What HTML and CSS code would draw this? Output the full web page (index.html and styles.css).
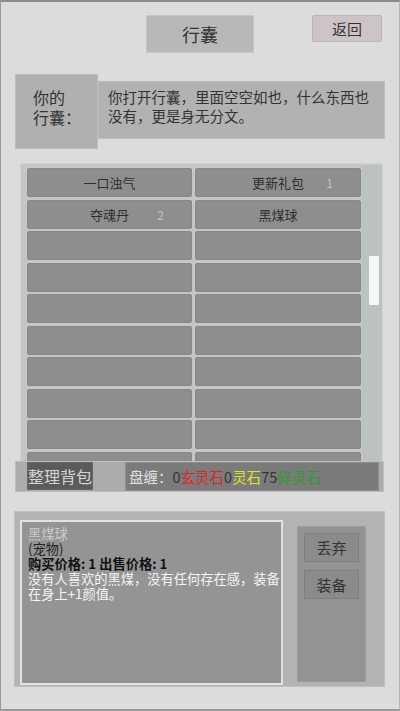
FILE: index.html
```html
<!DOCTYPE html>
<html lang="zh-CN">
<head>
<meta charset="utf-8">
<title>行囊</title>
<link rel="stylesheet" href="styles.css">
</head>
<body>
<div class="screen">
  <header class="header">
    <div class="title">行囊</div>
    <button class="back">返回</button>
  </header>

  <section class="intro">
    <div class="label">你的<br>行囊：</div>
    <div class="desc">你打开行囊，里面空空如也，什么东西也没有，更是身无分文。</div>
  </section>

  <section class="bag">
    <div class="grid">
      <div class="cell">一口浊气</div>
      <div class="cell">更新礼包<span class="count">1</span></div>
      <div class="cell">夺魂丹<span class="count">2</span></div>
      <div class="cell">黑煤球</div>
      <div class="cell"></div><div class="cell"></div>
      <div class="cell"></div><div class="cell"></div>
      <div class="cell"></div><div class="cell"></div>
      <div class="cell"></div><div class="cell"></div>
      <div class="cell"></div><div class="cell"></div>
      <div class="cell"></div><div class="cell"></div>
      <div class="cell"></div><div class="cell"></div>
      <div class="cell"></div><div class="cell"></div>
    </div>
    <div class="track"><div class="thumb"></div></div>
  </section>

  <section class="bar">
    <button class="sort">整理背包</button>
    <div class="money"><span class="m-label">盘缠：</span><span class="m-num">0</span><span class="m-red">玄灵石</span><span class="m-num">0</span><span class="m-yellow">灵石</span><span class="m-num">75</span><span class="m-green">碎灵石</span></div>
  </section>

  <section class="detail">
    <div class="info">
      <div class="i-name">黑煤球</div>
      <div class="i-type">(宠物)</div>
      <div class="i-price">购买价格: 1 出售价格: 1</div>
      <div class="i-desc">没有人喜欢的黑煤，没有任何存在感，装备在身上+1颜值。</div>
    </div>
    <div class="actions">
      <button class="act">丢弃</button>
      <button class="act">装备</button>
    </div>
  </section>
</div>
</body>
</html>
```

FILE: styles.css
```css
* { box-sizing: border-box; }
html, body { margin: 0; padding: 0; }
body {
  font-family: "Noto Sans CJK SC", "Noto Sans", sans-serif;
  color: #333;
  background: #dadada;
}
button {
  font-family: inherit;
  padding: 0;
  margin: 0;
  cursor: pointer;
}
.screen {
  width: 400px;
  height: 711px;
  background: #dcdcdc;
  border-top: 2px solid #8c8c8c;
  border-left: 1px solid #999;
  border-right: 1px solid #b5b5b5;
  border-bottom: 2px solid #9a9a9a;
  padding: 13px 14px 0 14px;
  overflow: hidden;
}

/* header */
.header {
  display: grid;
  grid-template-columns: 1fr 108px 1fr;
  margin: 0 -14px;
}
.title {
  grid-column: 2;
  height: 38px;
  background: #b8b8b8;
  border: 1px solid #c6c6c6;
  font-size: 18px;
  line-height: 36px;
  text-align: center;
  color: #333;
}
.back {
  grid-column: 3;
  justify-self: end;
  align-self: start;
  margin-right: 17px;
  width: 70px;
  height: 27px;
  background: #cdc5c5;
  border: 1px solid #bdb5b5;
  border-radius: 2px;
  font-size: 15px;
  line-height: 25px;
  color: #333;
}

/* intro */
.intro {
  display: flex;
  align-items: flex-start;
  margin-top: 21px;
}
.label {
  width: 83px;
  height: 75px;
  background: #b0b0b0;
  border: 1px solid #bcbcbc;
  padding: 12px 0 0 17px;
  font-size: 16px;
  line-height: 20px;
  color: #333;
}
.desc {
  width: 287px;
  height: 58px;
  margin-top: 7px;
  background: #b2b2b2;
  border: 1px solid #bdbdbd;
  padding: 5px 14px 0 9px;
  font-size: 14.5px;
  line-height: 19px;
  color: #333;
}

/* bag */
.bag {
  display: flex;
  margin: 14px 0 0 5px;
  width: 363px;
  height: 298px;
  background: #c6c6c6;
  border: 1px solid #d2d2d2;
  border-bottom: none;
  padding: 1px 0 0 6px;
  overflow: hidden;
}
.grid {
  display: grid;
  grid-template-columns: 165px 166px;
  grid-auto-rows: 29px;
  column-gap: 3px;
  row-gap: 2.5px;
  margin-top: 3px;
  width: 334px;
}
.cell {
  position: relative;
  background: #8e8e8e;
  border: 1px solid #888;
  border-radius: 2px;
  font-size: 13px;
  line-height: 27px;
  text-align: center;
  color: #2e2e2e;
}
.count {
  position: absolute;
  right: 27px;
  top: 0;
  font-size: 12px;
  color: #c4c4c4;
}
.track {
  width: 20px;
  margin-left: 1px;
  height: 296px;
  background: #bcc2c2;
  padding-top: 91px;
}
.thumb {
  width: 10px;
  height: 49px;
  margin-left: 7px;
  background: #f7f7f7;
  border-radius: 1px;
}

/* bottom bar */
.bar {
  display: flex;
  align-items: flex-start;
  width: 369px;
  height: 31px;
  background: #acacac;
  border: 1px solid #bdbdbd;
  padding-left: 11px;
}
.sort {
  width: 66px;
  height: 28px;
  background: #5b5b5b;
  border: 1px solid #666;
  font-size: 16px;
  line-height: 26px;
  color: #d4d4d4;
}
.money {
  width: 254px;
  height: 29px;
  margin-left: 32px;
  background: #7b7b7b;
  border: 1px solid #8e8e8e;
  padding-left: 3px;
  font-size: 14.5px;
  line-height: 27px;
  white-space: nowrap;
}
.m-label { color: #e2e2e2; }
.m-num { color: #333; }
.m-red { color: #e02424; }
.m-yellow { color: #e2e21c; }
.m-green { color: #2f9a2f; }

/* detail */
.detail {
  display: flex;
  align-items: flex-start;
  margin: 19px 0 0 -1px;
  width: 371px;
  height: 176px;
  background: #b3b3b3;
  border: 1px solid #c0c0c0;
  padding: 8px 0 0 5px;
}
.info {
  width: 263px;
  height: 165px;
  background: #949494;
  border: 2px solid #e2e2e2;
  padding: 4px 0 0 6px;
  font-size: 13.25px;
  line-height: 15px;
}
.i-name { color: #cacaca; }
.i-type { color: #222; }
.i-price { color: #111; font-weight: bold; }
.i-desc { color: #f4f4f4; }
.actions {
  display: flex;
  flex-direction: column;
  gap: 8px;
  width: 69px;
  height: 156px;
  margin: 6px 0 0 14px;
  background: #939393;
  border: 1px solid #9c9c9c;
  padding: 6px 0 0 6px;
}
.act {
  width: 55px;
  height: 29px;
  background: #8b8b8b;
  border: 1px solid #7e7e7e;
  font-size: 15px;
  line-height: 27px;
  color: #333;
}
```
